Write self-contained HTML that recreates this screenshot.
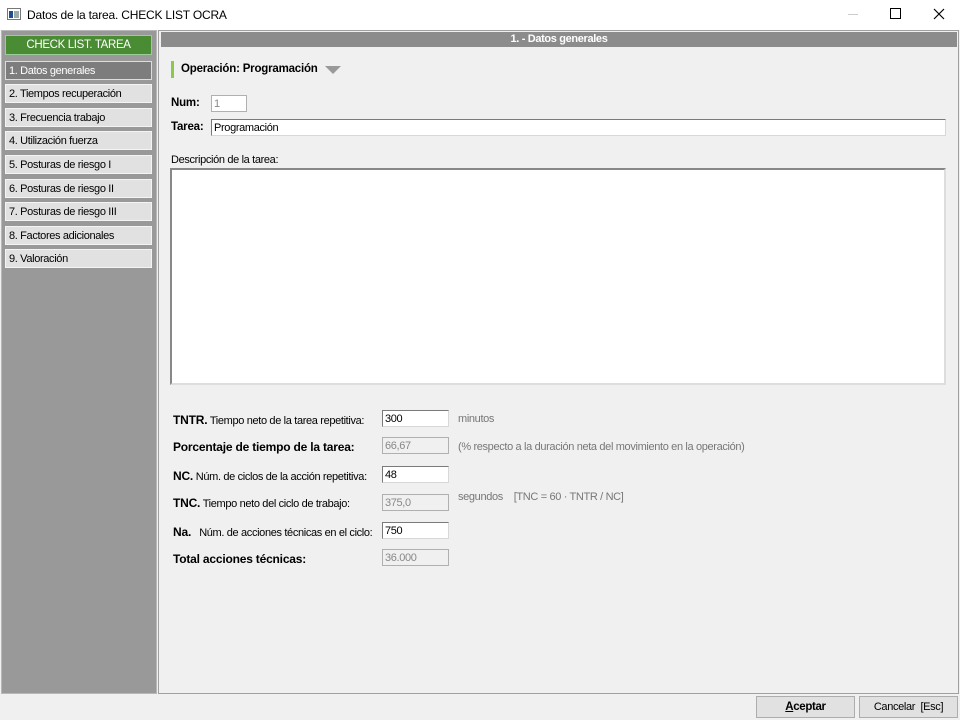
<!DOCTYPE html>
<html><head><meta charset="utf-8"><style>
*{margin:0;padding:0;box-sizing:border-box}
body{width:960px;height:720px;background:#f0f0f0;font-family:"Liberation Sans",sans-serif;font-size:11px;color:#000;position:relative;overflow:hidden;letter-spacing:-0.35px}
.abs{position:absolute}
#title{left:0;top:0;width:960px;height:30px;background:#fff}
#title .t{left:27px;top:8px;font-size:12px;letter-spacing:-0.2px}
#side{left:1px;top:30px;width:156px;height:664px;background:#999;border:1px solid #b8b8b8}
.nav{position:absolute;left:3px;width:147px;height:19px;background:#e1e1e1;border:1px solid #f4f4f4;padding:3px 0 0 3px;font-size:11px;color:#000}
#main{left:158px;top:30px;width:801px;height:664px;background:#f0f0f0;border:1px solid #a0a0a0}
#hdr{left:161px;top:32px;width:796px;height:15px;background:#8c8c8c;color:#fff;font-weight:bold;text-align:center;font-size:11px;line-height:15px}
.in{position:absolute;height:17px;background:#fff;border:1px solid #7a7a7a;border-right-color:#d8d8d8;border-bottom-color:#d8d8d8;padding:2px 2px 0;font-size:11px}
.dis{background:#f0f0f0;color:#888;border-color:#b0b0b0}
.b{font-weight:bold;font-size:12px;letter-spacing:-0.2px}
.g{color:#777}
.btn{position:absolute;top:696px;height:22px;background:#e1e1e1;border:1px solid #adadad;text-align:center;line-height:20px;font-size:11px}
</style></head><body>
<div id="title" class="abs">
<svg class="abs" style="left:7px;top:8px" width="14" height="12"><rect x="0.5" y="0.5" width="13" height="11" fill="#fff" stroke="#777"/><rect x="2" y="3" width="4" height="7" fill="#1f4e8c"/><rect x="7" y="3" width="5" height="7" fill="#9aa"/></svg>
<div class="abs t">Datos de la tarea. CHECK LIST OCRA</div>
<div class="abs" style="left:848px;top:14px;width:10px;height:1px;background:#ccc"></div>
<div class="abs" style="left:890px;top:8px;width:11px;height:11px;border:1px solid #000"></div>
<svg class="abs" style="left:933px;top:8px" width="12" height="12"><path d="M1 1L11 11M11 1L1 11" stroke="#000" stroke-width="1.2"/></svg>
</div>
<div id="side" class="abs">
<div class="abs" style="left:3px;top:4px;width:147px;height:20px;background:#4a8c34;border:1px solid #9c9;color:#fff;text-align:center;line-height:18px;font-size:11.5px">CHECK LIST. TAREA</div>
<div class="nav" style="top:30px;background:#7d7d7d;color:#fff;border-color:#ddd">1. Datos generales</div>
<div class="nav" style="top:53px">2. Tiempos recuperación</div>
<div class="nav" style="top:77px">3. Frecuencia trabajo</div>
<div class="nav" style="top:100px">4. Utilización fuerza</div>
<div class="nav" style="top:124px">5. Posturas de riesgo I</div>
<div class="nav" style="top:148px">6. Posturas de riesgo II</div>
<div class="nav" style="top:171px">7. Posturas de riesgo III</div>
<div class="nav" style="top:195px">8. Factores adicionales</div>
<div class="nav" style="top:218px">9. Valoración</div>
</div>
<div id="main" class="abs"></div>
<div id="hdr" class="abs">1. - Datos generales</div>
<div class="abs" style="left:171px;top:61px;width:3px;height:17px;background:#8cc84b"></div>
<div class="abs b" style="left:181px;top:63px;font-size:11.5px">Operación: Programación</div>
<svg class="abs" style="left:325px;top:66px" width="16" height="9"><path d="M0 0H16L8 8Z" fill="#999"/></svg>
<div class="abs b" style="left:171px;top:97px;font-size:11.5px">Num:</div>
<div class="in dis" style="left:211px;top:95px;width:36px;background:#fff">1</div>
<div class="abs b" style="left:171px;top:121px;font-size:11.5px">Tarea:</div>
<div class="in" style="left:211px;top:119px;width:735px">Programación</div>
<div class="abs" style="left:171px;top:154px">Descripción de la tarea:</div>
<div class="in" style="left:170px;top:168px;width:776px;height:217px;border-width:2px;border-color:#888 #ddd #ddd #888"></div>

<div class="abs" style="left:173px;top:413px"><span class="b">TNTR.</span> Tiempo neto de la tarea repetitiva:</div>
<div class="in" style="left:382px;top:410px;width:67px">300</div>
<div class="abs g" style="left:458px;top:413px">minutos</div>

<div class="abs b" style="left:173px;top:440px">Porcentaje de tiempo de la tarea:</div>
<div class="in dis" style="left:382px;top:437px;width:67px">66,67</div>
<div class="abs g" style="left:458px;top:441px">(% respecto a la duración neta del movimiento en la operación)</div>

<div class="abs" style="left:173px;top:469px"><span class="b">NC.</span> Núm. de ciclos de la acción repetitiva:</div>
<div class="in" style="left:382px;top:466px;width:67px">48</div>

<div class="abs" style="left:173px;top:496px"><span class="b">TNC.</span> Tiempo neto del ciclo de trabajo:</div>
<div class="in dis" style="left:382px;top:494px;width:67px">375,0</div>
<div class="abs g" style="left:458px;top:491px">segundos &nbsp;&nbsp;&nbsp;[TNC = 60 · TNTR / NC]</div>

<div class="abs" style="left:173px;top:525px"><span class="b">Na.</span>&nbsp;&nbsp; Núm. de acciones técnicas en el ciclo:</div>
<div class="in" style="left:382px;top:522px;width:67px">750</div>

<div class="abs b" style="left:173px;top:552px">Total acciones técnicas:</div>
<div class="in dis" style="left:382px;top:549px;width:67px">36.000</div>

<div class="btn" style="left:756px;width:99px;font-weight:bold;font-size:11.5px"><u>A</u>ceptar</div>
<div class="btn" style="left:859px;width:99px">Cancelar &nbsp;[Esc]</div>
</body></html>
